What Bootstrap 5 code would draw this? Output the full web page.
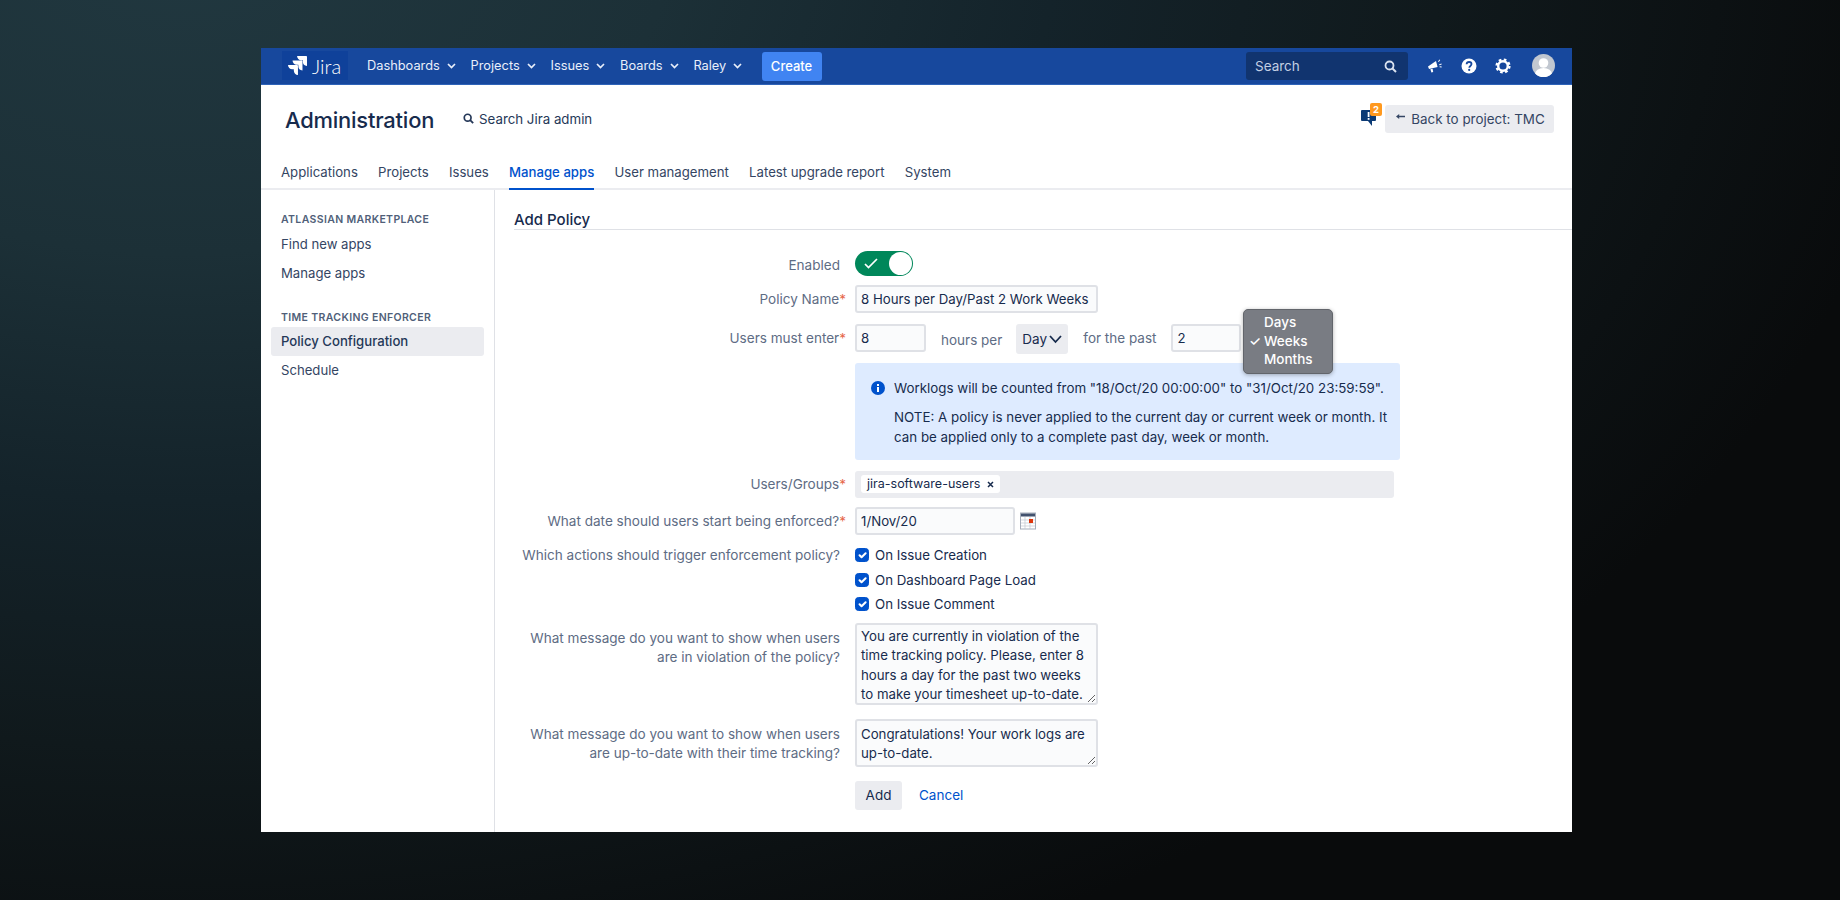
<!DOCTYPE html>
<html lang="en">
<head>
<meta charset="utf-8">
<title>Add Policy</title>
<link href="https://cdn.jsdelivr.net/npm/bootstrap@5.3.0/dist/css/bootstrap.min.css" rel="stylesheet">
<style>
html,body{height:900px;overflow:hidden}
body{font-family:Inter,"Liberation Sans",sans-serif;font-size:13.5px;color:#172b4d;line-height:20px;
 background:radial-gradient(ellipse 1750px 1120px at 180px -60px,#213840 0,#1c3037 28%,#14232a 50%,#10191c 72%,#0c1113 88%,#090b0c 100%)}
.appwin{width:1311px;height:784px;margin:48px 0 0 261px;background:#fff;overflow:hidden;position:relative}
.topbar{height:37px;background:#17489d;padding:3px 0 0 21px;align-items:flex-start;flex-wrap:nowrap;justify-content:flex-start;border-bottom:1px solid #2f63b8}
.logobox{width:66px;height:29px;background:#0f419a;color:#fff;font-family:Lato,sans-serif;font-size:20px;font-weight:300;gap:4px;padding-left:5px}
.topitems{margin-left:19px}
.toplink{color:#e9effa;font-size:12.8px;padding:0;height:29px;display:flex;align-items:center;gap:7px;margin-right:14.8px;text-decoration:none}
.topcreate{background:#4084f2;border:0;color:#fff;font-size:13px;font-weight:500;height:29px;width:60px;padding:0;border-radius:3px;margin-left:4.5px;margin-top:1px}
.topsearch{width:162px;height:28px;background:#11346f;border-radius:3px;color:#c3cfe3;font-size:13.5px;padding:0 11px 0 9px;margin-left:auto;margin-top:1px}
.topicons{width:164px;padding-left:19px;gap:18px;height:29px}
.avat{margin-left:3px}
.adminhead{height:70px;padding:0 18px 0 24px}
.adminhead h1{font-size:21.9px;font-weight:500;margin:1px 0 0;color:#172b4d;width:178px;letter-spacing:-.2px}
.adminsearch{gap:5px;color:#253858;font-size:13.3px;margin-top:-3px}
.backbtn{background:#ebecf0;border:0;color:#344563;height:28px;width:169px;padding:0 0 0 2px;border-radius:3px;font-size:13.4px;gap:6px;margin-top:-2px}
.backarrow{margin-bottom:5px}
.fbwrap{position:relative;width:25px;height:24px;margin-top:-7px}
.fbcount{position:absolute;left:10px;top:-2px;width:12px;height:13px;background:#ff991f;color:#fff;font-size:9.5px;font-weight:700;line-height:13px;text-align:center;border-radius:2px;padding:0}
.tabsbar{height:35px;padding-left:20px;border-bottom:2px solid #ebecf0}
.tabsbar .nav-link{color:#344563;padding:0;margin-right:20.2px;height:35px;line-height:35px;font-size:13.2px}
.tabsbar .nav-link.active{color:#0052cc;font-weight:500;border-bottom:2px solid #0052cc}
.bodyrow{height:642px}
.sidecol{width:234px;flex:none;border-right:1px solid #dfe1e6;padding-top:23px}
.sidehead{font-size:10.5px;font-weight:600;letter-spacing:.35px;color:#505f79;text-transform:uppercase;padding-left:20px;line-height:14px;margin-bottom:3px}
.sidehead.second{margin-top:23px;margin-bottom:2px}
.sidecol .nav-link{color:#344563;height:29px;line-height:29px;padding:0 10px;margin:0 10px 0 10px;border-radius:3px;font-size:13.15px}
.sidecol .nav-link.active{background:#ebecf0;color:#253858;font-weight:500}
.maincol{padding:20px 0 0 19px;flex:1;min-width:0}
.pagehead{font-size:15px;font-weight:500;line-height:19px;border-bottom:1px solid #dfe1e6;margin:0;color:#172b4d}
.frow{display:flex;align-items:center;position:relative}
.flab{width:332px;flex:none;text-align:right;color:#5e6c84;margin-right:9px;font-size:13.55px;line-height:21px}
.flab.plain{padding-right:6px}
.flab i{color:#de350b;font-style:normal;opacity:.75}
.r1{margin-top:21px;height:25px}
.r1 .flab{padding-top:3px}
.r2{margin-top:9px}
.r3{margin-top:11px;height:28px}
.r4{margin-top:11px;margin-left:341px}
.r5{margin-top:11px}
.r6{margin-top:9px}
.r7{margin-top:10px}
.r8{margin-top:4px;align-items:flex-start}
.r9{margin-top:14px;align-items:flex-start}
.r10{margin-top:14px;margin-left:341px}
.toggleon{width:58px;height:25px;border-radius:13px;background:#00875a;position:relative;display:block;padding:0}
.toggleon svg{position:absolute;left:9px;top:7px}
.toggleon b{position:absolute;right:1px;top:1px;width:23px;height:23px;border-radius:50%;background:#fff}
.jinput.form-control{height:28px;border:2px solid #dfe1e6;border-radius:3px;background:#fafbfc;color:#172b4d;padding:0 4px;font-size:13.25px;line-height:20px;box-shadow:none}
.w243{width:243px}.w72{width:71px}.w70{width:70px}.w160{width:160px}
.hperlab{color:#5e6c84;margin:3px 14px 0 15px}
.pastlab{color:#5e6c84;margin:0 15px 0 15px}
.daybtn{background:#ebecf0;border:0;width:52px;height:30px;flex:none;padding:0 0 0 6px;margin-top:2px;color:#172b4d;font-size:13.5px;border-radius:3px;gap:2px}
.osmenu.dropdown-menu{position:absolute;left:729px;top:-15px;width:90px;height:65px;min-width:0;padding:3px 0 0;background:#797c83;border:1px solid #62656b;border-radius:5px;z-index:5;display:block;box-shadow:0 1px 4px rgba(0,0,0,.3)}
.osmenu .dropdown-item{color:#fff;padding:0 0 0 20px;line-height:18.5px;font-size:13.5px;font-weight:500;position:relative;background:none}
.osmenu span{position:absolute;left:5px;top:0;font-size:13.5px}
.infobox.alert{width:545px;height:97px;background:#deebff;border:0;border-radius:3px;color:#172b4d;margin-bottom:0;padding:15px 0 0 16px;gap:9px;flex-wrap:nowrap}
.infobox p{margin:0 0 9px;line-height:20px;font-size:13.35px}
.infoicon{flex:none;margin-top:3px}
.groupbox{width:539px;height:27px;background:#ebecf0;border-radius:3px;padding:4px 6px}
.groupchip{background:#fff;height:18px;width:139px;border-radius:3px;font-size:12.5px;line-height:18px;padding:0 6px;color:#172b4d;gap:0;font-weight:400;justify-content:space-between}
.calicon{margin-left:5px}
.checkcol{display:flex;flex-direction:column;margin-top:-2px;padding-bottom:2px}
.checkcol .form-check{margin:0;padding:0;min-height:0;height:24.5px;display:flex;align-items:center;gap:6px}
.checkcol .form-check-input{margin:0;float:none;width:14px;height:14px;border-radius:3.5px;background-color:#0052cc;border-color:#0052cc;flex:none;background-size:13px 13px}
.checkcol label{font-size:13.3px;color:#172b4d}
.jarea.form-control{width:243px;border:2px solid #dfe1e6;border-radius:3px;background:#fafbfc;color:#172b4d;padding:2px 4px;font-size:13.25px;line-height:19.5px;overflow:hidden;box-shadow:none}
.h82{height:82px}.jarea.form-control.h48{height:48px;padding-top:4px}
.labtop{padding-top:6px;line-height:19.5px}
.labtop2{padding-top:6px;line-height:19.5px}
.addbtn{background:#ebecf0;border:0;width:47px;height:29px;padding:0;border-radius:3px;color:#172b4d;font-size:13.5px}
.cancellink{color:#0052cc;margin-left:17px;text-decoration:none;font-size:13.5px}
</style>
</head>
<body>
<div class="appwin">
  <nav class="navbar topbar d-flex">
    <a class="logobox d-flex align-items-center text-decoration-none" href="#">
      <svg width="21" height="19" viewBox="0 0 24 24" fill="#fff"><path d="M11.571 11.513H0a5.218 5.218 0 0 0 5.232 5.215h2.13v2.057A5.215 5.215 0 0 0 12.575 24V12.518a1.005 1.005 0 0 0-1.005-1.005zm5.723-5.756H5.736a5.215 5.215 0 0 0 5.215 5.214h2.129v2.058a5.218 5.218 0 0 0 5.215 5.214V6.758a1.001 1.001 0 0 0-1.001-1.001zM23.013 0H11.455a5.215 5.215 0 0 0 5.215 5.215h2.129v2.057A5.215 5.215 0 0 0 24 12.483V1.005A1.001 1.001 0 0 0 23.013 0Z"/></svg>
      <span>Jira</span>
    </a>
    <div class="d-flex topitems">
      <a class="toplink" href="#">Dashboards <svg width="9" height="6" viewBox="0 0 9 6"><path d="M1 1l3.5 3.5L8 1" fill="none" stroke="#e9effa" stroke-width="1.7"/></svg></a>
      <a class="toplink" href="#">Projects <svg width="9" height="6" viewBox="0 0 9 6"><path d="M1 1l3.5 3.5L8 1" fill="none" stroke="#e9effa" stroke-width="1.7"/></svg></a>
      <a class="toplink" href="#">Issues <svg width="9" height="6" viewBox="0 0 9 6"><path d="M1 1l3.5 3.5L8 1" fill="none" stroke="#e9effa" stroke-width="1.7"/></svg></a>
      <a class="toplink" href="#">Boards <svg width="9" height="6" viewBox="0 0 9 6"><path d="M1 1l3.5 3.5L8 1" fill="none" stroke="#e9effa" stroke-width="1.7"/></svg></a>
      <a class="toplink" href="#">Raley <svg width="9" height="6" viewBox="0 0 9 6"><path d="M1 1l3.5 3.5L8 1" fill="none" stroke="#e9effa" stroke-width="1.7"/></svg></a>
      <button class="btn topcreate" type="button">Create</button>
    </div>
    <div class="topsearch d-flex align-items-center justify-content-between">
      <span>Search</span>
      <svg width="13" height="13" viewBox="0 0 13 13"><circle cx="5.5" cy="5.5" r="4" fill="none" stroke="#dbe3f0" stroke-width="1.8"/><path d="M8.5 8.5l3.5 3.5" stroke="#dbe3f0" stroke-width="2"/></svg>
    </div>
    <div class="topicons d-flex align-items-center">
      <svg width="16" height="16" viewBox="0 0 16 16" fill="#fff"><path d="M1 8.5L9 3l1.6 6L2 11z"/><path d="M3.4 11.2l2.2-.5.6 3.3-1.8.5z"/><path d="M11 3.6l1.4-2 .8.5-1.4 2zM12 6.4l2.4-.8.3.9-2.4.8zM12.6 9.2l.1-.9 2 .2-.1.9z"/></svg>
      <svg width="16" height="16" viewBox="0 0 16 16"><circle cx="8" cy="8" r="7.5" fill="#fff"/><path d="M5.6 6.2c.1-1.5 1.2-2.2 2.5-2.2 1.4 0 2.4.9 2.4 2.1 0 1.9-2.2 1.8-2.2 3.6" fill="none" stroke="#17489d" stroke-width="1.8"/><circle cx="8.2" cy="11.9" r="1.1" fill="#17489d"/></svg>
      <svg width="16" height="16" viewBox="0 0 16 16"><circle cx="8" cy="8" r="4.8" fill="none" stroke="#fff" stroke-width="2.4"/><circle cx="8" cy="8" r="6.4" fill="none" stroke="#fff" stroke-width="2.4" stroke-dasharray="2.6 2.43"/></svg>
      <svg class="avat" width="23" height="23" viewBox="0 0 23 23"><defs><clipPath id="ac"><circle cx="11.5" cy="11.5" r="11.5"/></clipPath></defs><circle cx="11.5" cy="11.5" r="11.5" fill="#c1c7d0"/><g clip-path="url(#ac)" fill="#fff"><circle cx="11.5" cy="9" r="4.8"/><ellipse cx="11.5" cy="20" rx="8.5" ry="6"/></g></svg>
    </div>
  </nav>
  <div class="adminhead d-flex align-items-center">
    <h1>Administration</h1>
    <div class="adminsearch d-flex align-items-center">
      <svg width="11" height="11" viewBox="0 0 13 13"><circle cx="5.5" cy="5.5" r="4" fill="none" stroke="#253858" stroke-width="2"/><path d="M8.5 8.5l3.5 3.5" stroke="#253858" stroke-width="2.2"/></svg>
      <span>Search Jira admin</span>
    </div>
    <div class="ms-auto d-flex align-items-center">
      <div class="fbwrap">
        <svg class="d-block" width="17" height="22" viewBox="0 0 17 22"><path d="M2 5h13a1 1 0 0 1 1 1v9a1 1 0 0 1-1 1h-3v5l-4-5H2a1 1 0 0 1-1-1V6a1 1 0 0 1 1-1z" fill="#0b3a75"/><rect x="7.7" y="7" width="1.8" height="5" fill="#fff"/><rect x="7.7" y="13" width="1.8" height="1.8" fill="#fff"/></svg>
        <span class="badge fbcount">2</span>
      </div>
      <button class="btn backbtn d-flex align-items-center justify-content-center" type="button">
        <svg class="backarrow" width="9" height="6" viewBox="0 0 9 6"><path d="M0 2.5L3.2 0v1.7H9v1.6H3.2V5z" fill="#344563"/></svg>
        <span>Back to project: TMC</span>
      </button>
    </div>
  </div>
  <nav class="nav tabsbar">
    <a class="nav-link" href="#">Applications</a>
    <a class="nav-link" href="#">Projects</a>
    <a class="nav-link" href="#">Issues</a>
    <a class="nav-link active" href="#">Manage apps</a>
    <a class="nav-link" href="#">User management</a>
    <a class="nav-link" href="#">Latest upgrade report</a>
    <a class="nav-link" href="#">System</a>
  </nav>
  <div class="d-flex bodyrow">
    <aside class="sidecol">
      <div class="sidehead">Atlassian Marketplace</div>
      <nav class="nav flex-column">
        <a class="nav-link" href="#">Find new apps</a>
        <a class="nav-link" href="#">Manage apps</a>
      </nav>
      <div class="sidehead second">Time Tracking Enforcer</div>
      <nav class="nav flex-column">
        <a class="nav-link active" href="#">Policy Configuration</a>
        <a class="nav-link" href="#">Schedule</a>
      </nav>
    </aside>
    <main class="maincol">
      <h2 class="pagehead">Add Policy</h2>
      <form>
        <div class="frow r1">
          <label class="flab plain">Enabled</label>
          <span class="toggleon"><svg width="14" height="11" viewBox="0 0 14 11"><path d="M1 6l3.5 3.5L13 1" fill="none" stroke="#fff" stroke-width="1.7"/></svg><b></b></span>
        </div>
        <div class="frow r2">
          <label class="flab">Policy Name<i>*</i></label>
          <input class="form-control jinput w243" value="8 Hours per Day/Past 2 Work Weeks">
        </div>
        <div class="frow r3">
          <label class="flab">Users must enter<i>*</i></label>
          <input class="form-control jinput w72" value="8">
          <span class="hperlab">hours per</span>
          <button class="btn daybtn d-flex align-items-center" type="button">Day<svg width="13" height="9" viewBox="0 0 13 9"><path d="M1 1l5.5 6L12 1" fill="none" stroke="#172b4d" stroke-width="1.8"/></svg></button>
          <span class="pastlab">for the past</span>
          <input class="form-control jinput w70" value="2">
          <ul class="dropdown-menu osmenu list-unstyled m-0">
            <li><a class="dropdown-item" href="#">Days</a></li>
            <li><a class="dropdown-item" href="#"><span>✓</span>Weeks</a></li>
            <li><a class="dropdown-item" href="#">Months</a></li>
          </ul>
        </div>
        <div class="alert infobox d-flex r4">
          <svg class="infoicon" width="14" height="14" viewBox="0 0 14 14"><circle cx="7" cy="7" r="7" fill="#0052cc"/><rect x="6" y="6" width="2" height="5" fill="#fff"/><rect x="6" y="3" width="2" height="2" fill="#fff"/></svg>
          <div>
            <p>Worklogs will be counted from "18/Oct/20 00:00:00" to "31/Oct/20 23:59:59".</p>
            <p>NOTE: A policy is never applied to the current day or current week or month. It<br>can be applied only to a complete past day, week or month.</p>
          </div>
        </div>
        <div class="frow r5">
          <label class="flab">Users/Groups<i>*</i></label>
          <div class="groupbox d-flex"><span class="badge groupchip d-flex align-items-center">jira-software-users<svg width="7" height="7" viewBox="0 0 7 7"><path d="M1 1l5 5M6 1L1 6" stroke="#172b4d" stroke-width="1.5"/></svg></span></div>
        </div>
        <div class="frow r6">
          <label class="flab">What date should users start being enforced?<i>*</i></label>
          <input class="form-control jinput w160" value="1/Nov/20">
          <svg class="calicon" width="16" height="18" viewBox="0 0 16 18"><rect x=".5" y="1" width="15" height="16" fill="#fff" stroke="#a5adba"/><rect x="1" y="1.5" width="14" height="3" fill="#42526e"/><path d="M1 8h14M1 11h14M1 14h14M5 5v12M10 5v12" stroke="#c1c7d0" stroke-width=".7"/><rect x="9" y="7" width="4" height="4" fill="#de350b"/></svg>
        </div>
        <div class="frow r7">
          <label class="flab plain align-self-start">Which actions should trigger enforcement policy?</label>
          <div class="checkcol">
            <div class="form-check"><input class="form-check-input" type="checkbox" id="c1" checked><label class="form-check-label" for="c1">On Issue Creation</label></div>
            <div class="form-check"><input class="form-check-input" type="checkbox" id="c2" checked><label class="form-check-label" for="c2">On Dashboard Page Load</label></div>
            <div class="form-check"><input class="form-check-input" type="checkbox" id="c3" checked><label class="form-check-label" for="c3">On Issue Comment</label></div>
          </div>
        </div>
        <div class="frow r8">
          <label class="flab plain labtop">What message do you want to show when users<br>are in violation of the policy?</label>
          <textarea class="form-control jarea h82">You are currently in violation of the time tracking policy. Please, enter 8 hours a day for the past two weeks to make your timesheet up-to-date.</textarea>
        </div>
        <div class="frow r9">
          <label class="flab plain labtop2">What message do you want to show when users<br>are up-to-date with their time tracking?</label>
          <textarea class="form-control jarea h48">Congratulations! Your work logs are up-to-date.</textarea>
        </div>
        <div class="frow r10">
          <button class="btn addbtn" type="button">Add</button>
          <a class="cancellink" href="#">Cancel</a>
        </div>
      </form>
    </main>
  </div>
</div>
<script src="https://cdn.jsdelivr.net/npm/bootstrap@5.3.0/dist/js/bootstrap.bundle.min.js"></script>
</body>
</html>
